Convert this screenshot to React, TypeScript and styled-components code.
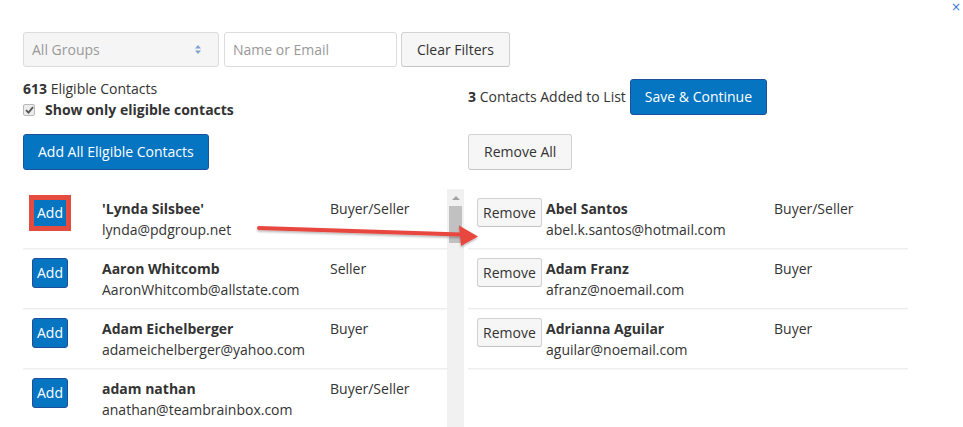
import React from "react";
import styled, { createGlobalStyle } from "styled-components";

const GlobalStyle = createGlobalStyle`
  html, body { margin: 0; padding: 0; background: #fff; }
  body {
    font-family: "Open Sans", "Liberation Sans", sans-serif;
    font-size: 14px;
    line-height: 20px;
    color: #333;
  }
  * { box-sizing: border-box; }
`;

const Page = styled.div`
  position: relative;
  width: 963px;
  height: 427px;
  overflow: hidden;
  padding-left: 23px;
`;

const CloseRow = styled.div`
  display: flex;
  justify-content: flex-end;
  height: 32px;
  padding: 0 2px 0 0;
`;

const CloseButton = styled.button`
  border: 0;
  background: none;
  padding: 0;
  height: 14px;
  color: #3a78d6;
  font: 12px/14px "DejaVu Sans", sans-serif;
  cursor: pointer;
`;

const Filters = styled.div`
  display: flex;
  align-items: stretch;
  height: 35px;
`;

const SelectBox = styled.div`
  width: 196px;
  margin-right: 5px;
  display: flex;
  align-items: center;
  justify-content: space-between;
  padding: 0 17px 0 8px;
  background: #f5f5f5;
  border: 1px solid #dcdcdc;
  border-radius: 3px;
  color: #999;
`;

const TextInput = styled.input`
  width: 173px;
  margin-right: 4px;
  padding: 0 8px;
  border: 1px solid #dcdcdc;
  border-radius: 3px;
  font: inherit;
  color: #333;
  background: #fff;
  &::placeholder { color: #999; }
`;

const GrayButton = styled.button<{ $pad?: number }>`
  font: inherit;
  color: #333;
  background: #f6f6f6;
  border: 1px solid #d2d2d2;
  border-bottom-color: #c4c4c4;
  border-radius: 3px;
  padding: 0 ${(p) => p.$pad ?? 15}px;
  cursor: pointer;
`;

const BlueButton = styled.button<{ $pad?: number }>`
  font: inherit;
  color: #fff;
  background: #0575c2;
  border: 1px solid #1d4f9c;
  border-radius: 3px;
  padding: 0 ${(p) => p.$pad ?? 14}px;
  height: 36px;
  cursor: pointer;
`;

const Columns = styled.div`
  display: grid;
  grid-template-columns: 441px 440px;
  grid-template-rows: 42px 36px auto;
  column-gap: 4px;
  row-gap: 14px;
  margin-top: 11px;
`;

const LeftSummary = styled.div`
  display: flex;
  flex-direction: column;
  padding-top: 1px;
`;

const CheckLine = styled.label`
  display: flex;
  align-items: center;
  gap: 10px;
  height: 22px;
  padding-top: 1px;
  font-weight: 700;
`;

const CheckBox = styled.span`
  width: 12px;
  height: 12px;
  border: 1px solid #b9b9b9;
  border-radius: 2px;
  background: #ececec;
  display: flex;
  align-items: center;
  justify-content: center;
`;

const RightSummary = styled.div`
  display: flex;
  align-items: center;
  gap: 4px;
  height: 36px;
  margin-top: 1px;
`;

const ActionCell = styled.div`
  display: flex;
`;

const ListArea = styled.div`
  display: flex;
  margin-top: 5px;
  height: 240px;
`;

const List = styled.div`
  flex: 1;
  overflow: hidden;
`;

const Row = styled.div<{ $nameCol: number }>`
  display: grid;
  grid-template-columns: ${(p) => p.$nameCol}px 228px 1fr;
  height: 60px;
  padding: 9px 9px 0;
  border-bottom: 1px solid #eeeeee;
  box-shadow: 0 1px 1px rgba(0, 0, 0, 0.03);
`;

const ButtonCell = styled.div`
  display: flex;
  align-items: flex-start;
`;

const AddButton = styled.button<{ $highlight?: boolean }>`
  font: inherit;
  color: #fff;
  background: #0575c2;
  border: 1px solid #1d4f9c;
  border-radius: 3px;
  padding: 4px 4px;
  line-height: 20px;
  cursor: pointer;
  ${(p) =>
    p.$highlight
      ? `border: 2px solid #e64b40; border-radius: 0; padding: 3px 3px; box-shadow: 0 0 0 3px #e64b40;`
      : ""}
`;

const RemoveButton = styled.button`
  font: inherit;
  color: #333;
  background: #f6f6f6;
  border: 1px solid #d0d0d0;
  border-bottom-color: #c2c2c2;
  border-radius: 3px;
  padding: 4px 5px;
  line-height: 19px;
  cursor: pointer;
`;

const NameCell = styled.div`
  display: flex;
  flex-direction: column;
  padding-top: 1px;
  white-space: nowrap;
`;

const Name = styled.span`
  font-weight: 700;
`;

const Email = styled.span`
  margin-top: 1px;
`;

const Role = styled.span`
  padding-top: 1px;
  white-space: nowrap;
`;

const Track = styled.div`
  width: 17px;
  background: #f1f1f1;
  display: flex;
  flex-direction: column;
  align-items: center;
  padding-top: 7px;
`;

const UpArrow = styled.span`
  width: 0;
  height: 0;
  border-left: 4px solid transparent;
  border-right: 4px solid transparent;
  border-bottom: 4px solid #a3a3a3;
`;

const Thumb = styled.span`
  width: 13px;
  height: 37px;
  margin-top: 6px;
  background: #c1c1c1;
`;

const ArrowOverlay = styled.svg`
  position: absolute;
  left: 0;
  top: 0;
  pointer-events: none;
`;

type Contact = { name: string; email: string; role: string };

const eligible: Contact[] = [
  { name: "'Lynda Silsbee'", email: "lynda@pdgroup.net", role: "Buyer/Seller" },
  { name: "Aaron Whitcomb", email: "AaronWhitcomb@allstate.com", role: "Seller" },
  { name: "Adam Eichelberger", email: "adameichelberger@yahoo.com", role: "Buyer" },
  { name: "adam nathan", email: "anathan@teambrainbox.com", role: "Buyer/Seller" },
];

const added: Contact[] = [
  { name: "Abel Santos", email: "abel.k.santos@hotmail.com", role: "Buyer/Seller" },
  { name: "Adam Franz", email: "afranz@noemail.com", role: "Buyer" },
  { name: "Adrianna Aguilar", email: "aguilar@noemail.com", role: "Buyer" },
];

export default function App() {
  return (
    <>
      <GlobalStyle />
      <Page>
        <CloseRow>
          <CloseButton aria-label="close">×</CloseButton>
        </CloseRow>
        <Filters>
          <SelectBox>
            <span>All Groups</span>
            <svg width="6" height="9" viewBox="0 0 6 9">
              <path d="M3 0 L6 3.5 H0 Z M3 9 L6 5.5 H0 Z" fill="#7fa3cf" />
            </svg>
          </SelectBox>
          <TextInput placeholder="Name or Email" />
          <GrayButton>Clear Filters</GrayButton>
        </Filters>
        <Columns>
          <LeftSummary>
            <div>
              <b>613</b> Eligible Contacts
            </div>
            <CheckLine>
              <CheckBox>
                <svg width="9" height="8" viewBox="0 0 9 8">
                  <path d="M1 4.2 L3.5 6.6 L8 1.2" stroke="#555" strokeWidth="1.8" fill="none" />
                </svg>
              </CheckBox>
              Show only eligible contacts
            </CheckLine>
          </LeftSummary>
          <RightSummary>
            <span>
              <b>3</b> Contacts Added to List
            </span>
            <BlueButton>Save &amp; Continue</BlueButton>
          </RightSummary>
          <ActionCell>
            <BlueButton>Add All Eligible Contacts</BlueButton>
          </ActionCell>
          <ActionCell>
            <GrayButton>Remove All</GrayButton>
          </ActionCell>
          <ListArea>
            <List>
              {eligible.map((c, i) => (
                <Row key={c.email} $nameCol={70}>
                  <ButtonCell>
                    <AddButton $highlight={i === 0}>Add</AddButton>
                  </ButtonCell>
                  <NameCell>
                    <Name>{c.name}</Name>
                    <Email>{c.email}</Email>
                  </NameCell>
                  <Role>{c.role}</Role>
                </Row>
              ))}
            </List>
            <Track>
              <UpArrow />
              <Thumb />
            </Track>
          </ListArea>
          <ListArea>
            <List>
              {added.map((c) => (
                <Row key={c.email} $nameCol={69}>
                  <ButtonCell>
                    <RemoveButton>Remove</RemoveButton>
                  </ButtonCell>
                  <NameCell>
                    <Name>{c.name}</Name>
                    <Email>{c.email}</Email>
                  </NameCell>
                  <Role>{c.role}</Role>
                </Row>
              ))}
            </List>
          </ListArea>
        </Columns>
        <ArrowOverlay width="963" height="427" viewBox="0 0 963 427">
          <defs>
            <filter id="arrowShadow" x="-10%" y="-50%" width="120%" height="200%">
              <feDropShadow dx="0" dy="1.5" stdDeviation="1.2" floodColor="#000" floodOpacity="0.3" />
            </filter>
          </defs>
          <g filter="url(#arrowShadow)" fill="#e8473f" stroke="none">
            <path d="M259 226 L461 232.5 L461 236.5 L259 230 Z" />
            <circle cx="259" cy="228" r="2" />
            <path d="M459 225.5 L478 236.5 L461 246 Z" />
          </g>
        </ArrowOverlay>
      </Page>
    </>
  );
}
